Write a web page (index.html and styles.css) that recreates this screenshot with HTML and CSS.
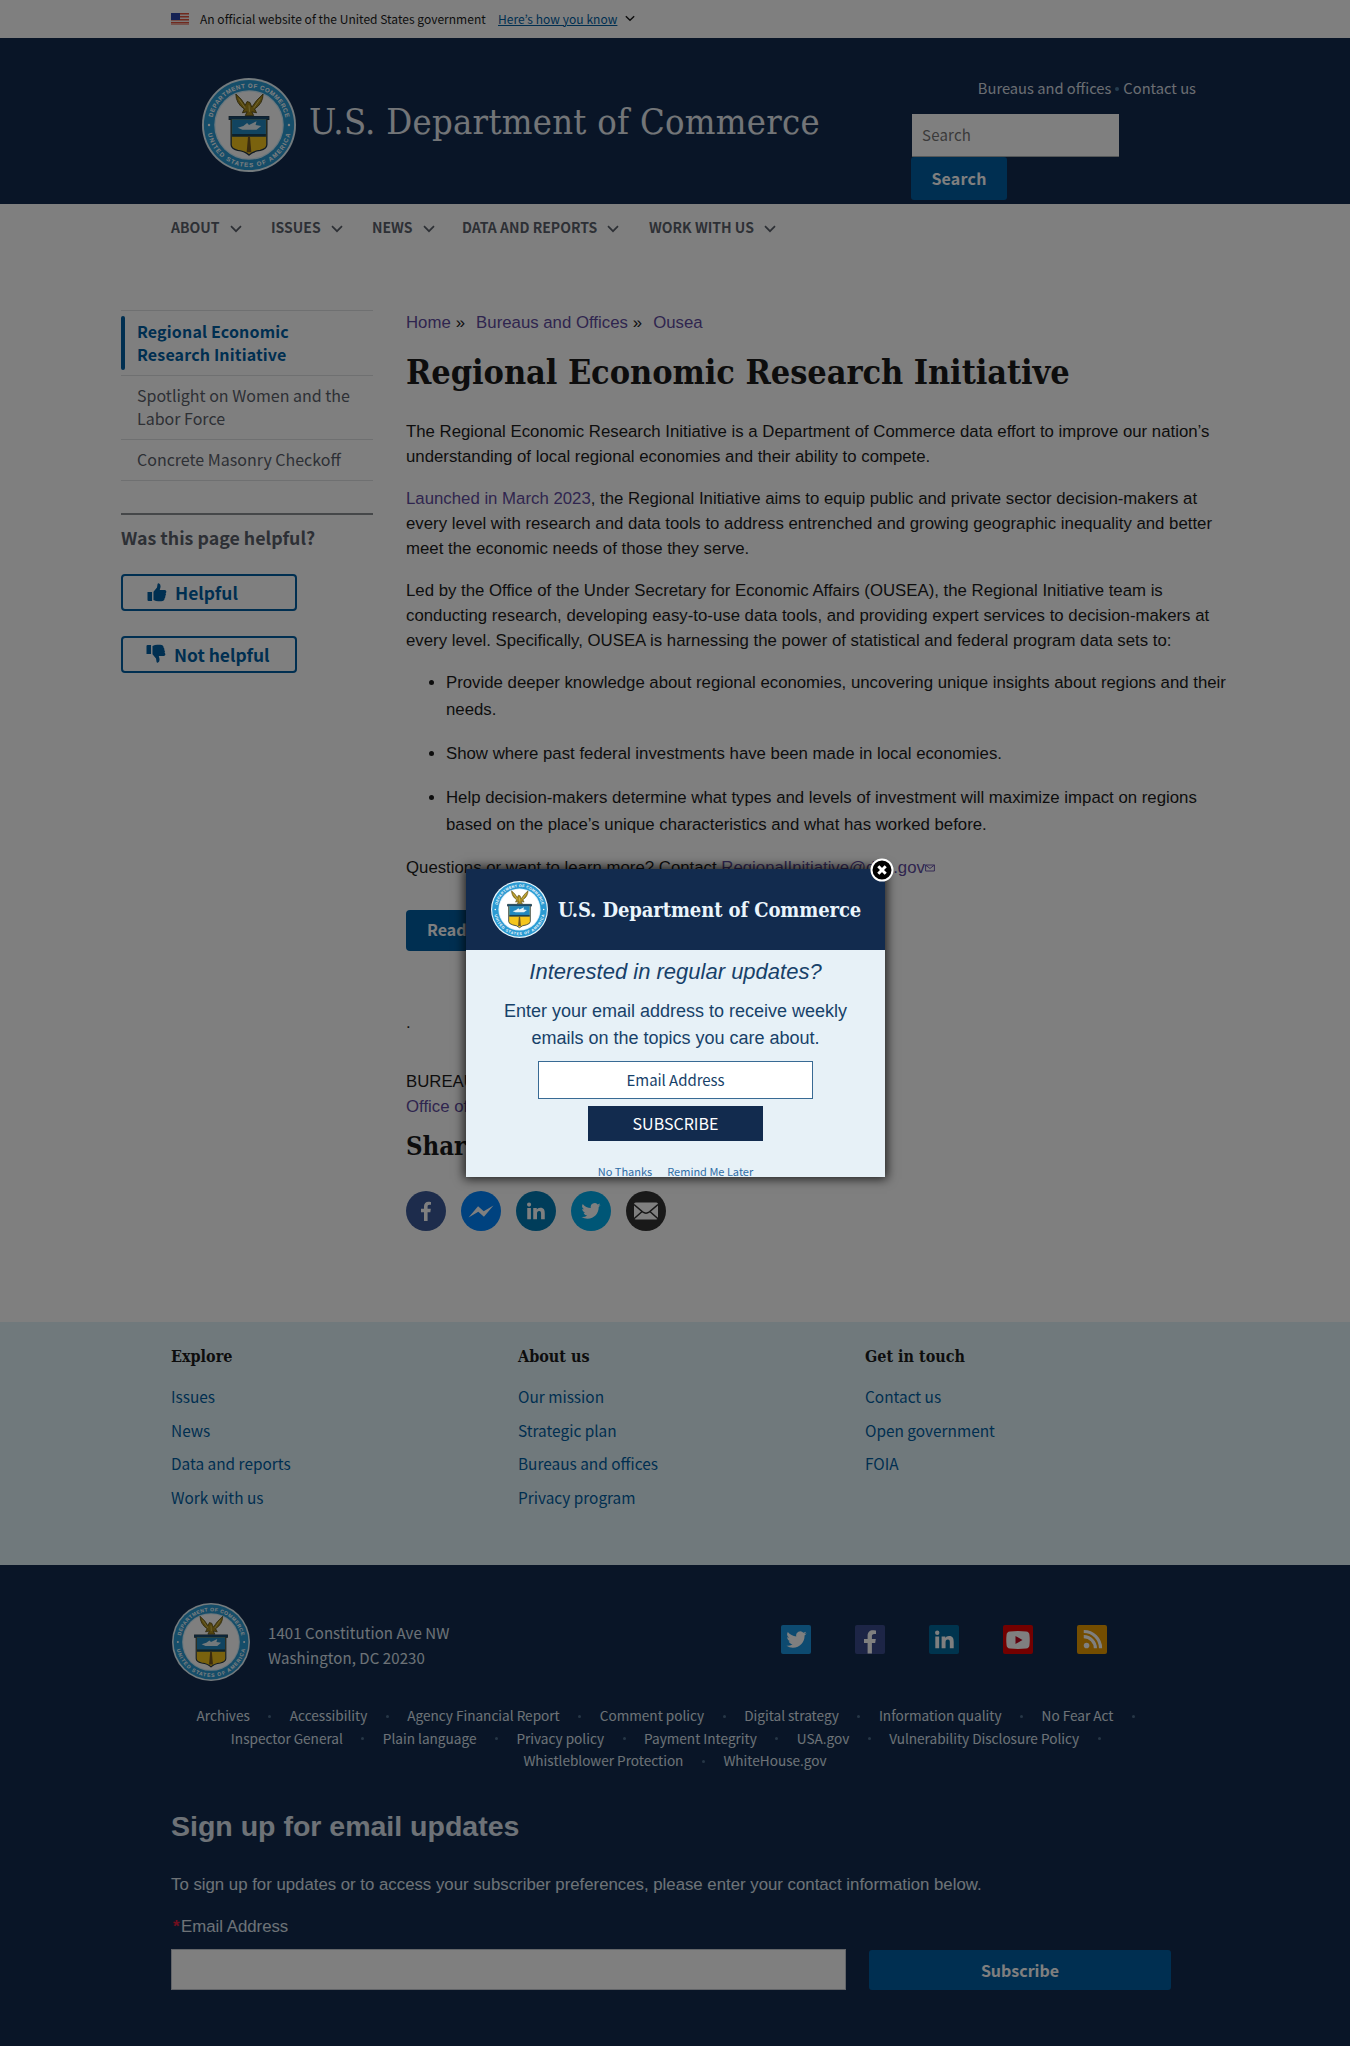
FILE: index.html
```html
<!DOCTYPE html>
<html lang="en">
<head>
<meta charset="utf-8">
<title>Regional Economic Research Initiative | U.S. Department of Commerce</title>
<link rel="stylesheet" href="styles.css">
</head>
<body>
<svg class="defs" width="0" height="0" aria-hidden="true">
  <symbol id="seal" viewBox="0 0 100 100">
    <circle cx="50" cy="50" r="50" fill="#e8f6fc"/>
    <circle cx="50" cy="50" r="48" fill="#2b9ad2"/>
    <circle cx="50" cy="50" r="37" fill="#d5eefa"/>
    <circle cx="50" cy="50" r="35.600" fill="#fff"/>
    <path id="arc-top" d="M10.500 50A39.500 39.500 0 0 1 89.500 50" fill="none"/>
    <path id="arc-bottom" d="M5.200 50A44.800 44.800 0 0 0 94.800 50" fill="none"/>
    <text class="seal-text"><textPath href="#arc-top" startOffset="50%" text-anchor="middle" textLength="108">DEPARTMENT OF COMMERCE</textPath></text>
    <text class="seal-text"><textPath href="#arc-bottom" startOffset="50%" text-anchor="middle" textLength="122">UNITED STATES OF AMERICA</textPath></text>
    <circle cx="7.500" cy="50" r="1.300" fill="#fff"/><circle cx="92.500" cy="50" r="1.300" fill="#fff"/>
    <path d="M36 17q0 10 9 16l-2 4 5-1-2 4h9l-2-4 5 1-2-4q9-6 9-16l-7 7-5 7-2-5-3-1-2 4-4-6z" fill="#a88a1c" stroke="#4d430f" stroke-width=".9"/>
    <path d="M39 22l7 10M62 22l-7 10M50 29l.500 7" stroke="#e3cf67" stroke-width="1" fill="none"/>
    <path d="M29 41h42v3h-2v27q0 4-7 6-8 1-12 5-4-4-12-5-7-2-7-6V44h-2z" fill="#f5c51c" stroke="#243744" stroke-width="1.400"/>
    <path d="M32 44h36v16H32z" fill="#2389c0"/>
    <path d="M29 41h42v3H29z" fill="#194b70"/>
    <path d="M38 53l6-2 4-3 2 2 8-4-1 4 6 1-5 4H43z" fill="#e7f3f8"/>
    <path d="M32 59.500h36v3H32z" fill="#1a4258"/>
    <path d="M49 62h2l1.500 17h-5z" fill="#74571d"/>
  </symbol>
  <symbol id="i-twitter" viewBox="0 0 24 24"><path d="M23.600 4.900c-.8.400-1.700.6-2.700.8 1-.6 1.700-1.500 2-2.600-.9.500-1.900.9-3 1.100a4.700 4.700 0 0 0-8.100 4.300C7.900 8.300 4.400 6.400 2.100 3.500a4.700 4.700 0 0 0 1.400 6.300c-.8 0-1.500-.2-2.100-.6v.1c0 2.300 1.600 4.200 3.800 4.600-.7.200-1.400.2-2.100.1.600 1.900 2.300 3.200 4.400 3.300A9.500 9.500 0 0 1 .6 19.200 13.300 13.300 0 0 0 7.800 21.300c8.700 0 13.700-7.300 13.400-14 .9-.6 1.700-1.500 2.400-2.400z"/></symbol>
  <symbol id="i-facebook" viewBox="0 0 24 24"><path d="M9.600 24V13.500H6V9.400h3.600V6.300C9.600 2.800 11.700.8 15 .8c1.500 0 3 .3 3 .3v3.500h-1.800c-1.800 0-2.300 1-2.300 2.200v2.600h3.900l-.6 4.100h-3.300V24z"/></symbol>
  <symbol id="i-linkedin" viewBox="0 0 24 24"><path d="M1.500 8.500h4.400V22H1.500zM3.700 1.800a2.500 2.500 0 1 1 0 5 2.500 2.500 0 0 1 0-5zM8.700 8.500h4.200v1.900c.7-1.300 2.200-2.300 4.300-2.300 4.500 0 5.300 2.900 5.300 6.700V22h-4.400v-6.400c0-1.600 0-3.600-2.300-3.600s-2.600 1.800-2.600 3.500V22H8.700z"/></symbol>
  <symbol id="i-messenger" viewBox="0 0 24 24"><path d="M.5 18 9.300 7.600l5.200 4.600 9-5.200-8.800 10.300-5.200-4.500z"/></symbol>
  <symbol id="i-mail" viewBox="0 0 28 20"><rect width="28" height="20" rx="2"/><path d="M0 2.500 10 11q4 3 8 0L28 2.500M0 19 9.500 10.500M28 19 18.500 10.500" fill="none" stroke="#2e2e2e" stroke-width="1.700"/></symbol>
  <symbol id="i-youtube" viewBox="0 0 24 18"><path d="M4 .5Q12-.4 20 .5q3.500.3 3.500 4 .5 4.500 0 9 0 3.700-3.500 4-8 .9-16 0-3.500-.3-3.500-4-.5-4.500 0-9Q.5.800 4 .5z"/><path d="M9.500 5v8l7-4z" fill="#c4001a"/></symbol>
  <symbol id="i-rss" viewBox="0 0 24 24"><circle cx="5.200" cy="18.800" r="3.200"/><path d="M2 8.700A13.300 13.300 0 0 1 15.300 22M2 2.800A19.200 19.200 0 0 1 21.200 22" fill="none" stroke="#fff" stroke-width="3.600"/></symbol>
  <symbol id="i-thumb" viewBox="0 0 20 20"><path d="M0 9.500h4.800V19H1.200Q0 19 0 17.800zM6.300 9.200 10 4.800 10.600 1Q11-.1 12.200.5q2 1 1.400 4.200l-.7 2.600h5.300q1.900.3 1.600 2.200-.1.900-.8 1.300 1 1.500-.4 2.800.7 1.500-.7 2.600.2 1.500-.9 2.300-.7.800-2.500.8h-3.200q-2.300 0-5-1.300z"/></symbol>
  <symbol id="i-chevron" viewBox="0 0 12 8"><path d="M1 1.200l5 5 5-5" fill="none" stroke="currentColor" stroke-width="1.700"/></symbol>
</svg>

<div class="page">
  <div class="banner">
    <svg class="flag" viewBox="0 0 18 12"><path fill="#f6efef" d="M0 0h18v12H0z"/><path fill="#e0533d" d="M0 0h18v1.500H0zM0 3h18v1.500H0zM0 6h18v1.500H0zM0 9h18v1.500H0z"/><path fill="#e0533d" opacity=".6" d="M0 11.200h18v.8H0z"/><path fill="#2b44a8" d="M0 0h9v7H0z"/></svg>
    <span class="banner-text">An official website of the United States government</span>
    <a class="banner-link">Here’s how you know</a>
    <svg class="banner-chevron"><use href="#i-chevron"/></svg>
  </div>

  <header class="header">
    <div class="brand">
      <svg class="seal-lg"><use href="#seal"/></svg>
      <span class="brand-name">U.S. Department of Commerce</span>
    </div>
    <div class="header-tools">
      <div class="header-links"><a>Bureaus and offices</a><i></i><a>Contact us</a></div>
      <div class="search-field">Search</div>
      <div class="search-button">Search</div>
    </div>
  </header>

  <nav class="nav">
    <a class="nav-about">ABOUT<svg><use href="#i-chevron"/></svg></a>
    <a class="nav-issues">ISSUES<svg><use href="#i-chevron"/></svg></a>
    <a class="nav-news">NEWS<svg><use href="#i-chevron"/></svg></a>
    <a class="nav-data">DATA AND REPORTS<svg><use href="#i-chevron"/></svg></a>
    <a class="nav-work">WORK WITH US<svg><use href="#i-chevron"/></svg></a>
  </nav>

  <div class="content">
    <aside class="sidebar">
      <ul class="sidenav">
        <li class="current"><a>Regional Economic<br>Research Initiative</a></li>
        <li><a>Spotlight on Women and the<br>Labor Force</a></li>
        <li><a>Concrete Masonry Checkoff</a></li>
      </ul>
      <h2 class="feedback-title">Was this page helpful?</h2>
      <div class="vote"><svg><use href="#i-thumb"/></svg><span>Helpful</span></div>
      <div class="vote vote-down"><svg><use href="#i-thumb"/></svg><span>Not helpful</span></div>
    </aside>

    <main class="main">
      <div class="crumbs"><a>Home</a><b>»</b><a>Bureaus and Offices</a><b>»</b><a>Ousea</a></div>
      <h1>Regional Economic Research Initiative</h1>
      <p>The Regional Economic Research Initiative is a Department of Commerce data effort to improve our nation’s<br>understanding of local regional economies and their ability to compete.</p>
      <p><a>Launched in March 2023</a>, the Regional Initiative aims to equip public and private sector decision-makers at<br>every level with research and data tools to address entrenched and growing geographic inequality and better<br>meet the economic needs of those they serve.</p>
      <p>Led by the Office of the Under Secretary for Economic Affairs (OUSEA), the Regional Initiative team is<br>conducting research, developing easy-to-use data tools, and providing expert services to decision-makers at<br>every level. Specifically, OUSEA is harnessing the power of statistical and federal program data sets to:</p>
      <ul class="goals">
        <li>Provide deeper knowledge about regional economies, uncovering unique insights about regions and their<br>needs.</li>
        <li>Show where past federal investments have been made in local economies.</li>
        <li>Help decision-makers determine what types and levels of investment will maximize impact on regions<br>based on the place’s unique characteristics and what has worked before.</li>
      </ul>
      <p class="contact">Questions or want to learn more? Contact <a>RegionalInitiative@doc.gov</a><svg class="mailto" viewBox="0 0 10 8"><path d="M.6 1h8.800v6H.6zM.6 1l4.400 3.500L9.400 1" fill="none" stroke="#6a55a8"/></svg></p>
      <div class="read-button">Read</div>
      <p class="dot">.</p>
      <p class="bureaus">BUREAUS<br><a>Office of</a></p>
      <h2 class="share-title">Share</h2>
      <div class="share">
        <span class="fb"><svg><use href="#i-facebook"/></svg></span>
        <span class="ms"><svg><use href="#i-messenger"/></svg></span>
        <span class="li"><svg><use href="#i-linkedin"/></svg></span>
        <span class="tw"><svg><use href="#i-twitter"/></svg></span>
        <span class="em"><svg><use href="#i-mail"/></svg></span>
      </div>
    </main>
  </div>

  <section class="sitemap">
    <div><h3>Explore</h3><a>Issues</a><a>News</a><a>Data and reports</a><a>Work with us</a></div>
    <div><h3>About us</h3><a>Our mission</a><a>Strategic plan</a><a>Bureaus and offices</a><a>Privacy program</a></div>
    <div><h3>Get in touch</h3><a>Contact us</a><a>Open government</a><a>FOIA</a></div>
  </section>

  <footer class="footer">
    <div class="footer-top">
      <svg class="seal-md"><use href="#seal"/></svg>
      <address>1401 Constitution Ave NW<br>Washington, DC 20230</address>
      <div class="social">
        <span class="s-tw"><svg><use href="#i-twitter"/></svg></span>
        <span class="s-fb"><svg><use href="#i-facebook"/></svg></span>
        <span class="s-li"><svg><use href="#i-linkedin"/></svg></span>
        <span class="s-yt"><svg><use href="#i-youtube"/></svg></span>
        <span class="s-rs"><svg><use href="#i-rss"/></svg></span>
      </div>
    </div>
    <div class="legal">
      <div><a>Archives</a><i></i><a>Accessibility</a><i></i><a>Agency Financial Report</a><i></i><a>Comment policy</a><i></i><a>Digital strategy</a><i></i><a>Information quality</a><i></i><a>No Fear Act</a><i></i></div>
      <div><a>Inspector General</a><i></i><a>Plain language</a><i></i><a>Privacy policy</a><i></i><a>Payment Integrity</a><i></i><a>USA.gov</a><i></i><a>Vulnerability Disclosure Policy</a><i></i></div>
      <div><a>Whistleblower Protection</a><i></i><a>WhiteHouse.gov</a></div>
    </div>
    <div class="signup">
      <h2>Sign up for email updates</h2>
      <p>To sign up for updates or to access your subscriber preferences, please enter your contact information below.</p>
      <label><em>*</em>Email Address</label>
      <div class="signup-row"><div class="signup-input"></div><div class="signup-button">Subscribe</div></div>
    </div>
  </footer>

  <div class="overlay"></div>
  <div class="modal">
    <div class="modal-head">
      <svg class="seal-sm"><use href="#seal"/></svg>
      <span>U.S. Department of Commerce</span>
    </div>
    <div class="modal-body">
      <h2>Interested in regular updates?</h2>
      <p>Enter your email address to receive weekly<br>emails on the topics you care about.</p>
      <div class="modal-input">Email Address</div>
      <div class="modal-button">SUBSCRIBE</div>
      <div class="modal-links"><a>No Thanks</a><a>Remind Me Later</a></div>
    </div>
    <svg class="close" viewBox="0 0 24 24"><circle cx="12" cy="12" r="10.500" fill="#000" stroke="#fff" stroke-width="2"/><path d="M8.300 8.300l7.400 7.400M15.700 8.300l-7.400 7.400" stroke="#fff" stroke-width="3"/></svg>
  </div>
</div>
</body>
</html>
```
FILE: styles.css
```css
:root {
  --sans: "Noto Sans CJK JP", "Noto Sans", sans-serif;
  --serif: "DejaVu Serif Condensed", "DejaVu Serif", serif;
  --arial: "Liberation Sans", Arial, sans-serif;
  --navy: #122b4e;
  --blue: #005ea2;
}
* { box-sizing: border-box; }
body { margin: 0; background: #fff; font: 16.800px/25px var(--arial); color: #1b1b1b; }
h1, h2, h3, p, ul { margin: 0; padding: 0; }
ul { list-style: none; }
i, em { font-style: normal; }
.defs { position: absolute; }
.page { position: relative; width: 1350px; height: 2046px; overflow: hidden; display: flex; flex-direction: column; }
.page > * { flex: none; }
.seal-text { font: bold 6.500px var(--arial); fill: #fff; }

.banner { height: 38px; padding: 0 0 1px 171px; display: flex; align-items: center; font: 12px/20px var(--sans); }
.flag { width: 18px; height: 12px; margin-right: 11px; }
.banner-text { width: 298px; white-space: nowrap; letter-spacing: .02px; }
.banner-link { color: var(--blue); text-decoration: underline; white-space: nowrap; width: 121px; letter-spacing: .05px; }
.banner-chevron { width: 10px; height: 7px; margin-left: 6px; }

.header { height: 166px; background: var(--navy); color: #fff; display: flex; }
.brand { width: 911px; padding: 40px 0 0 202px; display: flex; align-items: flex-start; gap: 13px; }
.seal-lg { width: 94px; height: 94px; }
.brand-name { font: 36px/48px var(--serif); letter-spacing: .3px; padding-top: 20px; white-space: nowrap; color: #e6ebf0; }
.header-tools { width: 285px; display: flex; flex-direction: column; align-items: flex-start; }
.header-links { align-self: flex-end; display: flex; align-items: center; margin-top: 38px; height: 24px; margin-bottom: 14px; font: 14.700px/24px var(--sans); color: #d6dbe3; white-space: nowrap; }
.header-links i { width: 4px; height: 4px; border-radius: 50%; background: #4a7aa0; margin: 2px 4px 0; }
.search-field { width: 207px; height: 43px; margin-left: 1px; padding: 0 10px; background: #fff; border-bottom: 1px solid #a9aeb1; font: 15px/42px var(--sans); letter-spacing: .2px; color: #757575; }
.search-button { width: 96px; height: 43px; border-radius: 3px; background: var(--blue); font: bold 16px/42px var(--sans); letter-spacing: .2px; text-align: center; color: #fff; }

.nav { height: 106px; padding: 13px 0 0 171px; display: grid; grid-template-columns: 100px 101px 90px 187px 200px; font: bold 14px/20px var(--sans); color: #5b616b; align-content: start; }
.nav a { display: flex; align-items: center; gap: 10px; white-space: nowrap; }
.nav svg { width: 12px; height: 8px; margin-top: 3px; }

.content { display: flex; padding-left: 121px; height: 1012px; gap: 33px; }
.sidebar { width: 252px; }
.sidenav { font: 16px/23px var(--sans); color: #5b616b; border-bottom: 1px solid #dfe1e2; margin-bottom: 32px; }
.sidenav li { border-top: 1px solid #dfe1e2; padding: 8px 0 9px 16px; white-space: nowrap; }
.sidenav .current { position: relative; font-weight: bold; letter-spacing: .15px; color: var(--blue); padding-top: 9px; padding-bottom: 9px; }
.sidenav .current::before { content: ""; position: absolute; left: 0; top: 5px; width: 4px; height: 54px; border-radius: 2px; background: var(--blue); }
.feedback-title { border-top: 2px solid #8b8e92; padding-top: 10px; font: bold 17.800px/24px var(--sans); color: #5b616b; height: 61px; }
.vote { width: 176px; height: 37px; border: 2px solid var(--blue); border-radius: 4px; margin-bottom: 25px; padding-left: 24px; display: flex; align-items: center; gap: 8px; font: bold 17.400px/30px var(--sans); color: var(--blue); }
.vote svg { width: 20px; height: 19px; fill: var(--blue); }
.vote-down { padding-left: 23px; }
.vote-down svg { transform: rotate(180deg) scaleX(-1); margin-top: -3px; }

.main { width: 850px; white-space: nowrap; }
.main a { color: #5f4b9e; }
.crumbs { display: flex; height: 24px; line-height: 25px; }
.crumbs b { font-weight: normal; margin: 0 11px 0 5px; }
.main h1 { font: bold 34px/44px var(--serif); letter-spacing: -.08px; margin: 16px 0 25px; }
.main p { margin-bottom: 17px; }
.goals { list-style: disc; padding-left: 40px; line-height: 27px; margin-top: -1px; }
.goals li { margin-bottom: 17px; }
.main .contact { margin-bottom: 30px; }
.mailto { width: 10px; height: 8px; vertical-align: 1px; }
.read-button { width: 130px; height: 41px; border-radius: 4px; background: var(--blue); color: #fff; font: bold 16px/39px var(--sans); padding-left: 21px; }
.main .dot { margin: 59px 0 34px; }
.main .bureaus { margin-bottom: 11px; }
.share-title { font: bold 25.500px/32px var(--serif); margin-bottom: 29px; }
.share { display: flex; gap: 15px; }
.share span { width: 40px; height: 40px; border-radius: 50%; display: flex; align-items: center; justify-content: center; }
.share svg { width: 20px; height: 20px; fill: #fff; }
.share .fb { background: #3b5998; }
.share .ms { background: #0084ff; }
.share .li { background: #007bb5; }
.share .tw { background: #00aced; }
.share .em { background: #333; }
.share .ms svg { width: 26px; height: 26px; }
.share .em svg { width: 24px; height: 18px; }

.sitemap { height: 243px; background: #e1f3f8; padding: 23px 0 0 171px; display: grid; grid-template-columns: repeat(3, 347px); align-content: start; }
.sitemap h3 { font: bold 16px/24px var(--serif); margin-bottom: 15px; height: 24px; }
.sitemap a { display: block; font: 15.400px/24px var(--sans); color: var(--blue); margin-bottom: 9.700px; }

.footer { height: 481px; background: var(--navy); color: #dce4ef; padding: 38px 0 0 171px; }
.footer-top { display: flex; height: 78px; }
.seal-md { width: 78px; height: 78px; margin-left: 1px; }
address { font: 15px/25px var(--sans); margin: 17px 0 0 18px; width: 513px; letter-spacing: .08px; }
.social { display: flex; gap: 44px; padding-top: 22px; }
.social span { width: 30px; height: 29px; border-radius: 2px; display: flex; align-items: center; justify-content: center; }
.social svg { width: 21px; height: 21px; fill: #fff; }
.s-tw { background: #1b95e0; } .s-fb { background: #3b4a8c; } .s-li { background: #00699c; } .s-yt { background: #e60000; } .s-rs { background: #e89a00; }
.social .s-fb { align-items: flex-end; }
.social .s-fb svg { width: 24px; height: 25px; }
.social .s-yt svg { width: 24px; height: 18px; }
.legal { margin-top: 23px; height: 90px; width: 1008px; font: 13.600px/22.500px var(--sans); color: #dce4ef; }
.legal div { display: flex; justify-content: center; align-items: center; white-space: nowrap; }
.legal i { width: 3px; height: 3px; border-radius: 50%; background: #4c6c8c; margin: 2px 18.500px 0; }
.signup h2 { font: bold 28.500px/36px var(--arial); margin-top: 14px; }
.signup p { margin-top: 28px; }
.signup label { display: block; margin-top: 17px; }
.signup em { color: #e31c3d; display: inline-block; width: 10px; padding-left: 2px; font-weight: bold; }
.signup-row { display: flex; gap: 23px; margin-top: 10px; align-items: flex-end; }
.signup-input { width: 675px; height: 41px; background: #fff; border: 1px solid #c4c8d0; }
.signup-button { width: 302px; height: 40px; border-radius: 3px; background: var(--blue); color: #fff; font: bold 16px/40px var(--sans); text-align: center; }

.overlay { position: absolute; inset: 0; background: rgba(0, 0, 0, .5); }
.modal { position: absolute; left: 466px; top: 869px; width: 419px; height: 308px; background: #e7f1f7; box-shadow: 0 0 10px 2px rgba(0, 0, 0, .75); white-space: nowrap; color: #174169; }
.modal-head { height: 81px; background: var(--navy); color: #eaf5fc; display: flex; padding: 12px 0 0 25px; gap: 10px; }
.seal-sm { width: 57px; height: 57px; }
.modal-head span { font: bold 20px/30px var(--serif); letter-spacing: -.1px; padding-top: 14px; }
.modal-body { text-align: center; height: 227px; overflow: hidden; display: flex; flex-direction: column; align-items: center; }
.modal h2 { font: italic 22px/30px var(--arial); margin: 7px 0 11px; }
.modal p { font-size: 18px; line-height: 27px; }
.modal-input { width: 275px; height: 38px; margin-top: 9px; border: 1px solid #386a94; background: #fff; font: 15px/36px var(--sans); letter-spacing: -.05px; }
.modal-button { width: 175px; height: 36px; margin-top: 7px; background: var(--navy); color: #fff; font: 16px/35px var(--sans); }
.modal-links { display: flex; gap: 15px; margin-top: 20px; font: 11px/20px var(--sans); color: #2f6da6; }
.close { position: absolute; width: 24px; height: 24px; left: 404px; top: -11px; }
```
